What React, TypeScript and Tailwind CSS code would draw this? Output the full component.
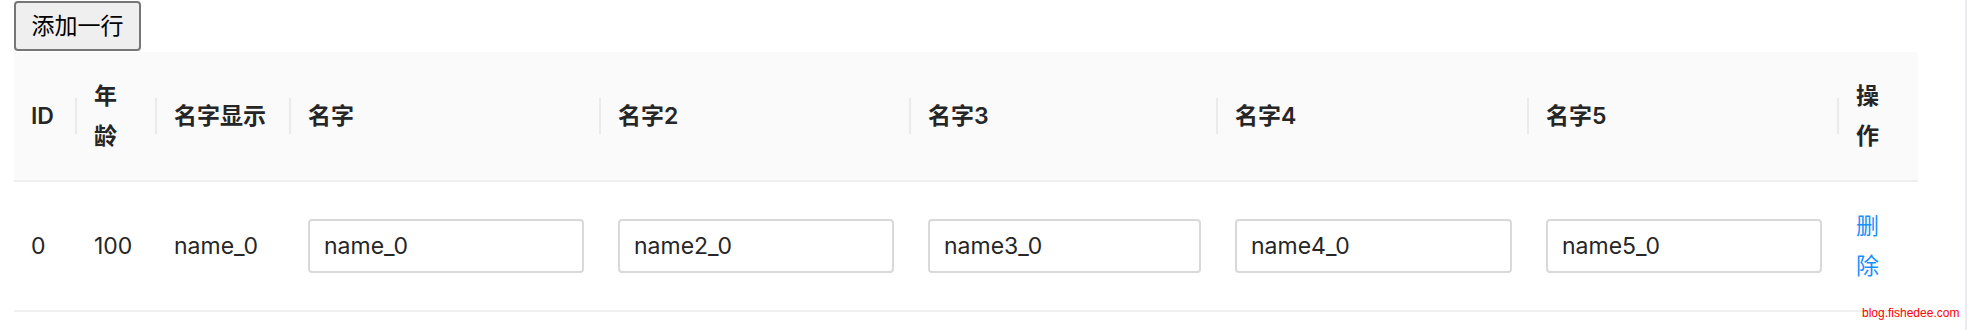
import { useState } from "react";

type Row = {
  id: number;
  age: number;
  name: string;
  name2: string;
  name3: string;
  name4: string;
  name5: string;
};

const columns = [
  { key: "id", title: "ID", width: "w-[63px]" },
  { key: "age", title: "年龄", width: "w-[80px]", narrow: true },
  { key: "show", title: "名字显示", width: "w-[134px]" },
  { key: "name", title: "名字", width: "w-[310px]" },
  { key: "name2", title: "名字2", width: "w-[310px]" },
  { key: "name3", title: "名字3", width: "w-[307px]" },
  { key: "name4", title: "名字4", width: "w-[311px]" },
  { key: "name5", title: "名字5", width: "w-[310px]" },
  { key: "action", title: "操作", width: "w-[79px]", narrow: true },
] as const;

const inputKeys = ["name", "name2", "name3", "name4", "name5"] as const;

const makeRow = (i: number): Row => ({
  id: i,
  age: 100,
  name: `name_${i}`,
  name2: `name2_${i}`,
  name3: `name3_${i}`,
  name4: `name4_${i}`,
  name5: `name5_${i}`,
});

export default function App() {
  const [rows, setRows] = useState<Row[]>([makeRow(0)]);

  const update = (id: number, key: (typeof inputKeys)[number], value: string) => {
    setRows((prev) => prev.map((r) => (r.id === id ? { ...r, [key]: value } : r)));
  };

  return (
    <div className="flex min-h-[330px] bg-white font-[Inter,'Noto_Sans_CJK_SC',sans-serif] text-[23px] text-[#262626]">
      <div className="relative w-[1965px] pl-[14px]">
        <button
          type="button"
          className="mt-px mb-px h-[50px] w-[127px] rounded-[4px] border-2 border-[#767676] bg-[#efefef] text-[23px] leading-none text-black"
          onClick={() => setRows((prev) => [...prev, makeRow(prev.length)])}
        >
          添加一行
        </button>

        <table className="w-[1904px] table-fixed border-collapse text-left">
          <colgroup>
            {columns.map((c) => (
              <col key={c.key} className={c.width} />
            ))}
          </colgroup>
          <thead>
            <tr>
              {columns.map((c, i) => (
                <th
                  key={c.key}
                  className={
                    "relative border-b-2 border-[#efefef] bg-[#fafafa] px-[17px] py-6 align-middle font-semibold leading-[40px] " +
                    (i === 0 ? "rounded-tl-[3px] " : "") +
                    (i === columns.length - 1
                      ? "rounded-tr-[3px]"
                      : "before:absolute before:right-0 before:top-1/2 before:h-[37px] before:w-[2px] before:-translate-y-1/2 before:bg-[#ebebeb] before:content-['']")
                  }
                >
                  {"narrow" in c ? <span className="inline-block w-[24px]">{c.title}</span> : c.title}
                </th>
              ))}
            </tr>
          </thead>
          <tbody>
            {rows.map((r) => (
              <tr key={r.id}>
                <td className="border-b-2 border-[#efefef] px-[17px] py-6 align-middle leading-[40px]">{r.id}</td>
                <td className="border-b-2 border-[#efefef] px-[17px] py-6 align-middle leading-[40px]">{r.age}</td>
                <td className="border-b-2 border-[#efefef] px-[17px] py-6 align-middle leading-[40px]">{r.name}</td>
                {inputKeys.map((k) => (
                  <td key={k} className="border-b-2 border-[#efefef] px-[17px] py-6 align-middle leading-[40px]">
                    <input
                      value={r[k]}
                      onChange={(e) => update(r.id, k, e.target.value)}
                      className="block h-[54px] w-full rounded-[4px] border-2 border-[#d9d9d9] bg-white px-[14px] text-[23px] text-[#262626] outline-none"
                    />
                  </td>
                ))}
                <td className="border-b-2 border-[#efefef] px-[17px] py-6 align-middle leading-[40px]">
                  <a
                    href="#"
                    className="inline-block w-[24px] text-[#1890ff]"
                    onClick={(e) => {
                      e.preventDefault();
                      setRows((prev) => prev.filter((x) => x.id !== r.id));
                    }}
                  >
                    删除
                  </a>
                </td>
              </tr>
            ))}
          </tbody>
        </table>

        <span className="absolute left-[1862px] top-[307px] font-['Liberation_Sans',sans-serif] text-[12px] leading-[12px] text-[#ff0000]">
          blog.fishedee.com
        </span>
      </div>
      <div className="w-[2px] self-stretch bg-[#ebebef]" />
    </div>
  );
}
